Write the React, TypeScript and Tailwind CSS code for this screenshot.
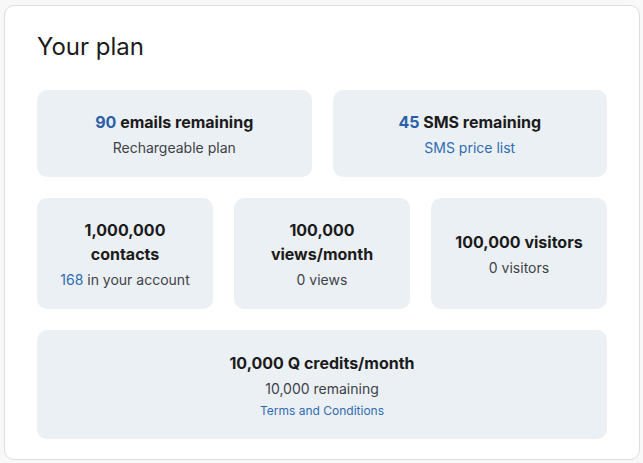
import React from "react";

type Tile = {
  lines: React.ReactNode[];
  sub: React.ReactNode;
  extra?: React.ReactNode;
};

const blue = "text-[#2b5fa6]";
const link = "text-[#2f6cb0]";

function PlanTile({ lines, sub, extra, h }: Tile & { h: string }) {
  return (
    <div className={`flex flex-col items-center justify-center rounded-[10px] bg-[#ebf0f5] text-center ${h}`}>
      {lines.map((l, i) => (
        <div key={i} className="text-[16px] font-bold leading-6 text-[#1b1b1b]">
          {l}
        </div>
      ))}
      <div className="mt-1 text-[14px] leading-5 text-[#3d4247]">{sub}</div>
      {extra && <div className="mt-1 text-[12px] leading-4">{extra}</div>}
    </div>
  );
}

export default function App() {
  return (
    <div className="min-h-[463px] bg-[#f8f8f8] pt-[5px] pl-1" style={{ fontFamily: "Inter, 'Noto Sans', sans-serif" }}>
      <div className="w-[636px] rounded-[10px] border border-[#dedede] bg-white px-8 pt-[25px] pb-5">
        <h2 className="mb-[27px] text-[24px] leading-8 font-normal text-[#1b1b1b]">Your plan</h2>

        <div className="grid grid-cols-2 gap-[21px]">
          <PlanTile
            h="h-[87px]"
            lines={[
              <>
                <span className={blue}>90</span> emails remaining
              </>,
            ]}
            sub="Rechargeable plan"
          />
          <PlanTile
            h="h-[87px]"
            lines={[
              <>
                <span className={blue}>45</span> SMS remaining
              </>,
            ]}
            sub={<span className={link}>SMS price list</span>}
          />
        </div>

        <div className="mt-[21px] grid grid-cols-3 gap-[21px]">
          <PlanTile
            h="h-[111px]"
            lines={["1,000,000", "contacts"]}
            sub={
              <>
                <span className={link}>168</span> in your account
              </>
            }
          />
          <PlanTile h="h-[111px]" lines={["100,000", "views/month"]} sub="0 views" />
          <PlanTile h="h-[111px]" lines={["100,000 visitors"]} sub="0 visitors" />
        </div>

        <div className="mt-[21px]">
          <PlanTile
            h="h-[109px]"
            lines={["10,000 Q credits/month"]}
            sub="10,000 remaining"
            extra={<span className={link}>Terms and Conditions</span>}
          />
        </div>
      </div>
    </div>
  );
}
